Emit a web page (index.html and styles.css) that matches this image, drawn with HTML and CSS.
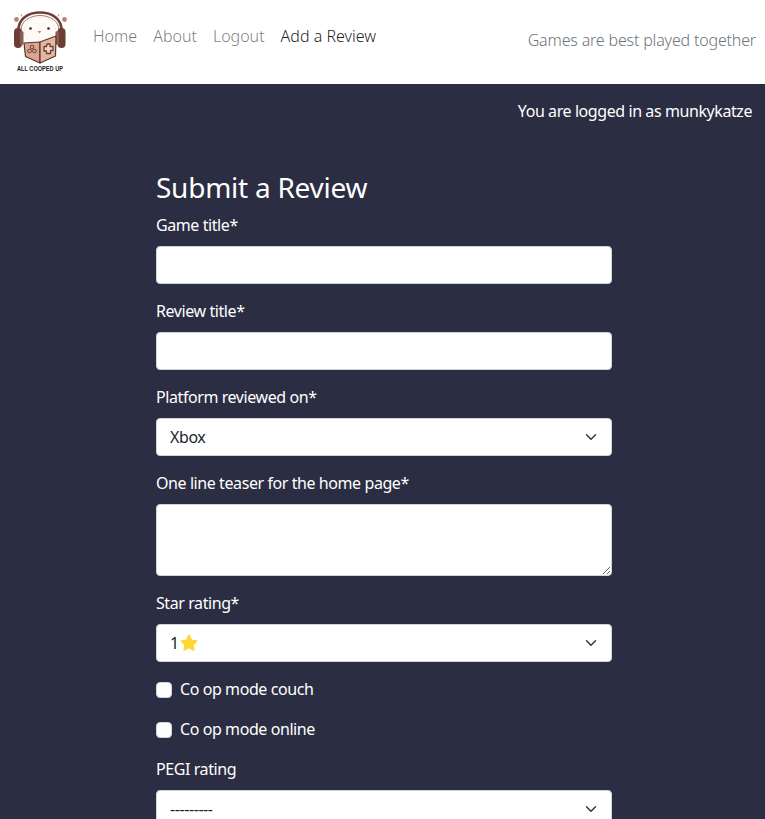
FILE: index.html
```html
<!DOCTYPE html>
<html lang="en">
<head>
<meta charset="utf-8">
<title>Add a Review</title>
<link rel="stylesheet" href="styles.css">
</head>
<body>
<header class="navbar">
  <a class="brand" href="#" aria-label="All Cooped Up">
    <svg class="logo" viewBox="12 12 60 60" width="60" height="60">
      <path d="M24 33 C24 22 31 17 40 17 C49 17 56 22 56 33 C56 39 49 44 40 44 C31 44 24 39 24 33Z" fill="#fdfaf7" stroke="#efe3dc" stroke-width=".6"/>
      <path d="M18.5 31 C18 19 28 12.5 40 12.5 C52 12.5 62 19 61.5 31" fill="none" stroke="#6b4038" stroke-width="2.6"/>
      <path d="M21 30 C21 21 30 15.500 40 15.500 C50 15.500 59 21 59 30" fill="none" stroke="#a87565" stroke-width="1"/>
      <rect x="14" y="28" width="8" height="20" rx="4" fill="#6b3d35"/>
      <rect x="57.500" y="28" width="8" height="20" rx="4" fill="#6b3d35"/>
      <rect x="20" y="31" width="3.500" height="14" rx="1.700" fill="#8f5c4e"/>
      <rect x="55.500" y="31" width="3.500" height="14" rx="1.700" fill="#8f5c4e"/>
      <circle cx="30.500" cy="28.500" r="1.300" fill="#3a2622"/>
      <circle cx="48.500" cy="28.500" r="1.300" fill="#3a2622"/>
      <path d="M37.500 31 L41.500 31 L39.500 33.500Z" fill="#c98a6e"/>
      <path d="M24 43 L40 42 L40 63 L25.500 56.500Z" fill="#d8a691" stroke="#5b332c" stroke-width="1.200" stroke-linejoin="round"/>
      <path d="M40 42 L56 36 L55.500 56 L40 63Z" fill="#e2b6a2" stroke="#5b332c" stroke-width="1.200" stroke-linejoin="round"/>
      <circle cx="32" cy="47" r="1.800" fill="none" stroke="#6b3d35" stroke-width="1"/>
      <circle cx="29.500" cy="51" r="1.800" fill="none" stroke="#6b3d35" stroke-width="1"/>
      <circle cx="34.500" cy="51" r="1.800" fill="none" stroke="#6b3d35" stroke-width="1"/>
      <path d="M47 44 h3 v2.500 h3 v4 h-2.500 v3 h-4 v-2.500 h-2.500 v-4.500 h2.500z" fill="#f1d4c5" stroke="#6b3d35" stroke-width="1.300" stroke-linejoin="round"/>
      <circle cx="16.500" cy="19.500" r="2.400" fill="#b98272"/>
      <circle cx="64.500" cy="19.500" r="2.400" fill="#b98272"/>
      <path d="M21 14 l1 2.500 M59 14 l-1 2.500" stroke="#8f6a5f" stroke-width=".7" fill="none"/>
      <text x="17" y="70.500" class="logo-text" textLength="46" lengthAdjust="spacingAndGlyphs">ALL COOPED UP</text>
    </svg>
  </a>
  <nav class="nav">
    <a href="#">Home</a>
    <a href="#">About</a>
    <a href="#">Logout</a>
    <a href="#" class="active">Add a Review</a>
  </nav>
  <span class="tagline">Games are best played together</span>
</header>
<main class="page">
  <p class="status">You are logged in as munkykatze</p>
  <form class="review-form">
    <h2>Submit a Review</h2>
    <div class="field">
      <label for="game">Game title*</label>
      <input id="game" type="text">
    </div>
    <div class="field">
      <label for="title">Review title*</label>
      <input id="title" type="text">
    </div>
    <div class="field">
      <label for="platform">Platform reviewed on*</label>
      <select id="platform"><option>Xbox</option></select>
    </div>
    <div class="field">
      <label for="teaser">One line teaser for the home page*</label>
      <textarea id="teaser"></textarea>
    </div>
    <div class="field">
      <label for="stars">Star rating*</label>
      <div class="select-wrap">
        <select id="stars"><option>1</option></select>
        <svg class="star" viewBox="0 0 24 24" width="18" height="18"><path d="M12 1.6 L15.2 8.2 L22.4 9.2 L17.2 14.2 L18.5 21.4 L12 18 L5.5 21.4 L6.8 14.2 L1.6 9.2 L8.8 8.2Z" fill="#fdd835" stroke="#fdd835" stroke-width="2" stroke-linejoin="round"/></svg>
      </div>
    </div>
    <div class="check"><input id="couch" type="checkbox"><label for="couch">Co op mode couch</label></div>
    <div class="check"><input id="online" type="checkbox"><label for="online">Co op mode online</label></div>
    <div class="field">
      <label for="pegi">PEGI rating</label>
      <select id="pegi"><option>---------</option></select>
    </div>
  </form>
</main>
</body>
</html>
```
FILE: styles.css
```css
* { box-sizing: border-box; }
html, body { margin: 0; height: 819px; overflow: hidden; }
body {
  font-family: "Noto Sans", sans-serif;
  font-size: 16px;
  font-weight: 400;
  letter-spacing: -0.42px;
  line-height: 24px;
  background: #2b2d42;
  color: #fff;
}
.navbar {
  display: flex;
  align-items: center;
  height: 84px;
  background: #fff;
  padding: 0 9px 0 12px;
  font-weight: 300;
}
.brand { display: block; width: 60px; height: 60px; margin-right: 13px; }
.logo { display: block; overflow: visible; }
.logo-text { font: 700 8px "Liberation Sans Narrow", "Liberation Sans", sans-serif; letter-spacing: 0; fill: #1f1a1a; }
.nav { display: flex; margin-bottom: 12px; letter-spacing: 0; }
.nav a { padding: 8px; color: rgba(0,0,0,.55); text-decoration: none; }
.nav a.active { color: rgba(0,0,0,.9); }
.tagline { margin-left: auto; color: #6c757d; margin-bottom: 4px; letter-spacing: -0.17px; }
.page { padding: 0 13px; }
.status { margin: 0; padding-top: 15px; text-align: right; }
.review-form { width: 456px; margin: 47px 0 0 143px; }
h2 { margin: 0 0 10px; font-size: 28px; font-weight: 400; line-height: 34px; letter-spacing: -0.25px; }
.field { margin-bottom: 16px; }
label { display: block; margin-bottom: 10px; line-height: 22px; }
input[type=text], select, textarea {
  display: block;
  width: 100%;
  height: 38px;
  padding: 6px 13px;
  border: 1px solid #ced4da;
  border-radius: 4px;
  background-color: #fff;
  color: #212529;
  font: inherit;
  letter-spacing: inherit;
}
textarea { height: 72px; }
select {
  appearance: none;
  padding-right: 36px;
  background-image: url("data:image/svg+xml,%3csvg xmlns='http://www.w3.org/2000/svg' viewBox='0 0 16 16'%3e%3cpath fill='none' stroke='%23343a40' stroke-linecap='round' stroke-linejoin='round' stroke-width='2' d='m2 5 6 6 6-6'/%3e%3c/svg%3e");
  background-repeat: no-repeat;
  background-position: right 12px center;
  background-size: 16px 12px;
}
.select-wrap { position: relative; }
.star { position: absolute; left: 24px; top: 10px; }
.check { display: flex; align-items: center; height: 24px; margin-bottom: 16px; }
.check input {
  appearance: none;
  width: 16px;
  height: 16px;
  margin: 0 8px 0 0;
  background: #fff;
  border: 1px solid #ced4da;
  border-radius: 4px;
}
.check label { margin: 0 0 2px; }
```
